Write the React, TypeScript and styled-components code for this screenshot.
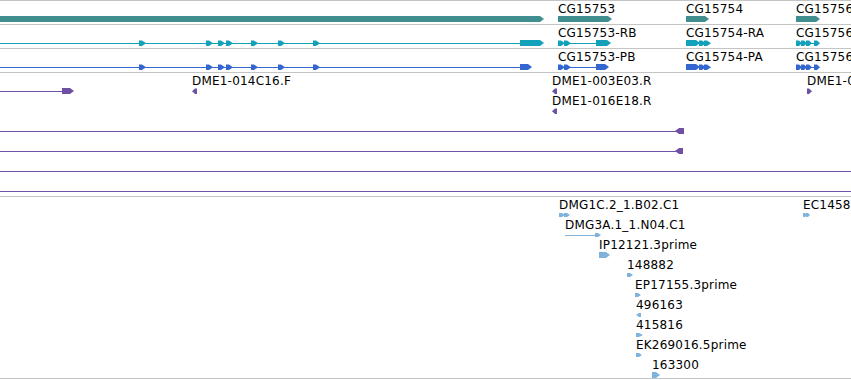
import styled, { createGlobalStyle } from "styled-components";

const ROW = 20;

const GlobalStyle = createGlobalStyle`
  html, body {
    margin: 0;
    padding: 0;
    background: #fff;
    overflow: hidden;
  }
  body {
    font-family: "DejaVu Sans", "Liberation Sans", sans-serif;
  }
`;

const Browser = styled.div`
  width: 851px;
  height: 380px;
  display: flex;
  flex-direction: column;
  background: #fff;
`;

const Track = styled.div<{ $height: number; $last?: boolean }>`
  position: relative;
  flex: none;
  box-sizing: border-box;
  height: ${({ $height }) => $height}px;
  border-top: 1px solid #c4c4c4;
  border-bottom: ${({ $last }) => ($last ? "1px solid #c4c4c4" : "none")};
  overflow: hidden;
`;

const FeatureBox = styled.div<{ $x: number; $row: number }>`
  position: absolute;
  left: ${({ $x }) => $x}px;
  top: ${({ $row }) => $row * ROW + 1}px;
  display: flex;
  flex-direction: column;
  align-items: flex-start;
`;

const Label = styled.span`
  display: block;
  height: 14px;
  line-height: 14px;
  font-size: 12px;
  letter-spacing: 0.2px;
  color: #000;
  white-space: nowrap;
`;

const Glyph = styled.svg`
  display: block;
  overflow: visible;
`;

type Part =
  | { k: "line"; from: number; to: number }
  | { k: "arrow"; at: number; dir?: "l" | "r"; small?: boolean; len?: number }
  | { k: "block"; from: number; to: number; tip?: "l" | "r" };

interface FeatureData {
  x: number;
  row: number;
  label?: string;
  parts: Part[];
}

const renderPart = (p: Part, i: number, color: string) => {
  if (p.k === "line") {
    return <rect key={i} x={p.from} y={3} width={p.to - p.from} height={1} fill={color} />;
  }
  if (p.k === "arrow") {
    const len = p.len ?? (p.small ? 6 : 7);
    const top = p.small ? 1 : 0.5;
    const bot = p.small ? 5 : 6;
    const mid = (top + bot) / 2;
    const body = Math.round(len * 0.45);
    const a = p.at;
    const pts =
      p.dir === "l"
        ? `${a},${mid} ${a + len - body},${top} ${a + len},${top} ${a + len},${bot} ${a + len - body},${bot}`
        : `${a},${top} ${a + body},${top} ${a + len},${mid} ${a + body},${bot} ${a},${bot}`;
    return <polygon key={i} points={pts} fill={color} />;
  }
  const tipLen = Math.min(4, p.to - p.from);
  let pts = `${p.from},0 ${p.to},0 ${p.to},6 ${p.from},6`;
  if (p.tip === "r") {
    pts = `${p.from},0 ${p.to - tipLen},0 ${p.to},3 ${p.to - tipLen},6 ${p.from},6`;
  } else if (p.tip === "l") {
    pts = `${p.from},3 ${p.from + tipLen},0 ${p.to},0 ${p.to},6 ${p.from + tipLen},6`;
  }
  return <polygon key={i} points={pts} fill={color} />;
};

const partEnd = (p: Part) => (p.k === "arrow" ? p.at + (p.len ?? 7) : p.to);

const Feature = ({ data, color }: { data: FeatureData; color: string }) => {
  const width = Math.max(...data.parts.map(partEnd), 1);
  return (
    <FeatureBox $x={data.x} $row={data.row}>
      <Label>{data.label ?? ""}</Label>
      <Glyph width={width} height={8} viewBox={`0 0 ${width} 8`}>
        {data.parts.map((p, i) => renderPart(p, i, color))}
      </Glyph>
    </FeatureBox>
  );
};

const exonStarts = [139, 206, 218, 226, 251, 278, 313];

const transcript = (blockEnd: number, label: string): FeatureData[] => [
  {
    x: 0,
    row: 0,
    parts: [
      { k: "line", from: 0, to: 520 },
      ...exonStarts.map((at): Part => ({ k: "arrow", at })),
      { k: "block", from: 520, to: blockEnd, tip: "r" },
    ],
  },
  {
    x: 558,
    row: 0,
    label: `CG15753-${label}B`,
    parts: [
      { k: "line", from: 5, to: 38 },
      { k: "arrow", at: 0 },
      { k: "arrow", at: 6 },
      { k: "block", from: 38, to: blockEnd === 544 ? 53 : 51, tip: "r" },
    ],
  },
  {
    x: 686,
    row: 0,
    label: `CG15754-${label}A`,
    parts: [
      { k: "block", from: 0, to: 14, tip: "r" },
      { k: "arrow", at: 13 },
      { k: "arrow", at: 18 },
    ],
  },
  {
    x: 796,
    row: 0,
    label: `CG15756-${label}A`,
    parts: [
      { k: "line", from: 12, to: 22 },
      { k: "arrow", at: 0, len: 6 },
      { k: "arrow", at: 5, len: 6 },
      { k: "arrow", at: 10, len: 6 },
      { k: "arrow", at: 18, len: 6 },
    ],
  },
];

const tracks: { height: number; color: string; last?: boolean; features: FeatureData[] }[] = [
  {
    height: 24,
    color: "#418e90",
    features: [
      { x: 0, row: 0, parts: [{ k: "block", from: 0, to: 544, tip: "r" }] },
      { x: 558, row: 0, label: "CG15753", parts: [{ k: "block", from: 0, to: 54, tip: "r" }] },
      { x: 686, row: 0, label: "CG15754", parts: [{ k: "block", from: 0, to: 23, tip: "r" }] },
      { x: 796, row: 0, label: "CG15756", parts: [{ k: "block", from: 0, to: 24, tip: "r" }] },
    ],
  },
  { height: 24, color: "#12a0bb", features: transcript(544, "R") },
  { height: 24, color: "#3466cf", features: transcript(532, "P") },
  {
    height: 124,
    color: "#6e51a5",
    features: [
      {
        x: 0,
        row: 0,
        parts: [
          { k: "line", from: 0, to: 62 },
          { k: "block", from: 62, to: 74, tip: "r" },
        ],
      },
      { x: 192, row: 0, label: "DME1-014C16.F", parts: [{ k: "arrow", at: 0, dir: "l", len: 5 }] },
      { x: 552, row: 0, label: "DME1-003E03.R", parts: [{ k: "arrow", at: 0, dir: "l", len: 5 }] },
      { x: 552, row: 1, label: "DME1-016E18.R", parts: [{ k: "arrow", at: 0, dir: "l", len: 5 }] },
      { x: 807, row: 0, label: "DME1-017B11.F", parts: [{ k: "arrow", at: 0, len: 5 }] },
      {
        x: 0,
        row: 2,
        parts: [
          { k: "line", from: 0, to: 677 },
          { k: "block", from: 675, to: 684, tip: "l" },
        ],
      },
      {
        x: 0,
        row: 3,
        parts: [
          { k: "line", from: 0, to: 677 },
          { k: "block", from: 675, to: 683, tip: "l" },
        ],
      },
      { x: 0, row: 4, parts: [{ k: "line", from: 0, to: 851 }] },
      { x: 0, row: 5, parts: [{ k: "line", from: 0, to: 851 }] },
    ],
  },
  {
    height: 183,
    color: "#80b3dc",
    last: true,
    features: [
      {
        x: 559,
        row: 0,
        label: "DMG1C.2_1.B02.C1",
        parts: [
          { k: "arrow", at: 0, small: true },
          { k: "arrow", at: 5, small: true },
        ],
      },
      {
        x: 803,
        row: 0,
        label: "EC14585.5prime",
        parts: [
          { k: "arrow", at: 0, small: true, len: 4 },
          { k: "arrow", at: 3, small: true, len: 4 },
        ],
      },
      {
        x: 565,
        row: 1,
        label: "DMG3A.1_1.N04.C1",
        parts: [
          { k: "line", from: 0, to: 32 },
          { k: "arrow", at: 30, small: true },
        ],
      },
      { x: 599, row: 2, label: "IP12121.3prime", parts: [{ k: "block", from: 0, to: 11, tip: "r" }] },
      { x: 627, row: 3, label: "148882", parts: [{ k: "arrow", at: 0, small: true }] },
      { x: 635, row: 4, label: "EP17155.3prime", parts: [{ k: "arrow", at: 0, small: true }] },
      { x: 636, row: 5, label: "496163", parts: [{ k: "arrow", at: 0, dir: "l", small: true, len: 5 }] },
      { x: 636, row: 6, label: "415816", parts: [{ k: "arrow", at: 0, small: true, len: 7 }] },
      { x: 636, row: 7, label: "EK269016.5prime", parts: [{ k: "arrow", at: 0, small: true }] },
      { x: 652, row: 8, label: "163300", parts: [{ k: "block", from: 0, to: 8, tip: "r" }] },
    ],
  },
];

const App: React.FC = () => {
  return (
    <>
      <GlobalStyle />
      <Browser>
        {tracks.map((track, ti) => (
          <Track key={ti} $height={track.height} $last={track.last}>
            {track.features.map((f, fi) => (
              <Feature key={fi} data={f} color={track.color} />
            ))}
          </Track>
        ))}
      </Browser>
    </>
  );
};

export default App;
